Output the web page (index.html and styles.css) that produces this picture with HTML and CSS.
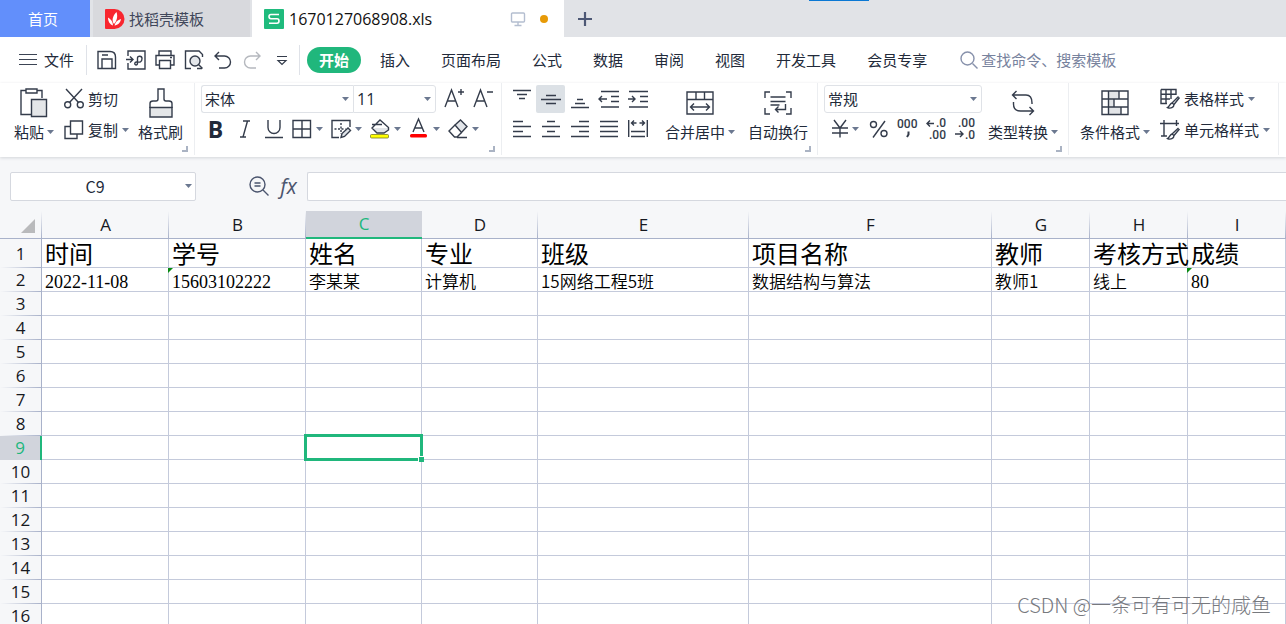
FILE: index.html
```html
<!DOCTYPE html>
<html lang="zh-CN">
<head>
<meta charset="utf-8">
<title>1670127068908.xls</title>
<link rel="stylesheet" href="styles.css">
</head>
<body>
<svg class="defs" aria-hidden="true">
  <symbol id="caret" viewBox="0 0 7 4"><path d="M0 0h7L3.5 4z" fill="#6b7890"/></symbol>
</svg>

<nav class="tabs">
  <button class="tab tab-home">首页</button>
  <button class="tab tab-docer">
    <svg width="20" height="20" viewBox="0 0 20 20"><path d="M1 0h8.500a10 10 0 0 1 0 20H1a1 1 0 0 1-1-1V1a1 1 0 0 1 1-1z" fill="#f8262f"/><path d="M9 15C6.500 11.500 7.500 7 11.500 3c1.500 4.500.5 9-2.500 12zM8 16.500C5 15.500 3 12.500 3 8.500c3 1.500 5 4.500 5 8zM9.500 16.500c.8-3.500 3-5.500 6.500-6.500-.5 3.500-3 6-6.500 6.500z" fill="#fff"/></svg>
    <span>找稻壳模板</span>
  </button>
  <button class="tab tab-file">
    <svg width="20" height="20" viewBox="0 0 20 20"><rect width="20" height="20" rx="1" fill="#1fbb7d"/><path d="M15 5.500H7Q5 5.500 5 7.600T7 9.800h6q2 0 2 2.200t-2 2.200H5" fill="none" stroke="#fff" stroke-width="1.600"/></svg>
    <span class="file-name">1670127068908.xls</span>
    <svg width="16" height="16" viewBox="0 0 16 16" fill="none" stroke="#b4bed0" stroke-width="1.400"><rect x="1.500" y="2" width="13" height="9" rx="1"/><path d="M8 11v3.500M4.500 14.500h7"/></svg>
    <i class="dot"></i>
  </button>
  <button class="tab tab-add" aria-label="新建"><svg width="16" height="16" viewBox="0 0 16 16"><path d="M8 1v14M1 8h14" stroke="#4d5875" stroke-width="2.200"/></svg></button>
  <i class="accent"></i>
</nav>

<header class="menu">
  <button class="file-menu"><svg width="18" height="14" viewBox="0 0 18 14"><path d="M0 1.500h18M0 6.500h18M0 11.500h18" stroke="#3c4454" stroke-width="1.200"/></svg>文件</button>
  <div class="quick">
    <button aria-label="保存"><svg class="ic" viewBox="0 0 20 20"><path d="M1 1.500h12q5.500 0 5.500 5.500v11.500H1zM5 18.500V9h10v9.500M5 5h6"/></svg></button>
    <button aria-label="输出为PDF"><svg class="ic" viewBox="0 0 20 20"><path d="M2 6V1h17v18H2v-6M0 9.500h6.500M4 6.500l3 3-3 3M10 15c-2-.5-1.500-3 .5-3 2 0 5.500 1 5.500-3.500 0-3-4.500-3-4.500-.5v5c0 1.500-.5 2-1.500 2z"/></svg></button>
    <button aria-label="打印"><svg class="ic" viewBox="0 0 20 20"><path d="M4 5V1h12v4M4.500 15H1V5.500h18V15h-3.500"/><path d="M4.500 10.500h11v8h-11zM15 7.500h2"/></svg></button>
    <button aria-label="打印预览"><svg class="ic" viewBox="0 0 20 20"><path d="M7 18.500H1.500V1H15l3.500 3.500V7M13 18.500h5"/><circle cx="11" cy="11" r="5" fill="#e3e6ea"/><path d="M14.500 14.500l4 4"/></svg></button>
    <button aria-label="撤销"><svg class="ic" viewBox="0 0 20 20"><path d="M6 2L2 6l4 4M2 6h9.500a5.700 5.700 0 0 1 0 12H6"/></svg></button>
    <button aria-label="恢复"><svg class="ic pale" viewBox="0 0 20 20"><path d="M14 2l4 4-4 4M18 6H8.500a5.700 5.700 0 0 0 0 12H14"/></svg></button>
    <button aria-label="自定义"><svg class="ic" viewBox="0 0 20 20"><path d="M6 6.500h10M7 10.500l4 4 4-4z" stroke-width="1.200"/></svg></button>
  </div>
  <button class="start">开始</button>
  <nav class="ribbon-tabs">
    <button>插入</button><button>页面布局</button><button>公式</button><button>数据</button><button>审阅</button><button>视图</button><button>开发工具</button><button>会员专享</button>
  </nav>
  <label class="search">
    <svg width="18" height="18" viewBox="0 0 18 18" fill="none" stroke="#8791ab" stroke-width="1.400"><circle cx="7.500" cy="7.500" r="6.500"/><path d="M12.500 12.500l5 5"/></svg>
    <input type="text" placeholder="查找命令、搜索模板" aria-label="查找命令">
  </label>
</header>

<section class="ribbon">
  <div class="group g-clip">
    <button class="big">
      <svg width="28" height="30" viewBox="0 0 28 30" class="line"><path d="M6 2.500H1v24h10M17 2.500h5V10"/><path d="M6 1h11v4H6z"/><path d="M11.500 11.500h15v17h-15z" fill="#e4e6e8"/></svg>
      <span class="cap">粘贴<svg class="caret"><use href="#caret"/></svg></span>
    </button>
    <div class="stack">
      <button class="small"><svg class="ic" viewBox="0 0 20 20"><path d="M2 0l12.500 13.500M18 0L5.500 13.500"/><circle cx="3.700" cy="15.800" r="3"/><circle cx="16.300" cy="15.800" r="3"/></svg><span>剪切</span></button>
      <button class="small"><svg class="ic" viewBox="0 0 20 20"><path d="M6 6.500H1v12h12v-4.500"/><path d="M6.500 1h12v13h-12z"/></svg><span>复制</span><svg class="caret"><use href="#caret"/></svg></button>
    </div>
    <button class="big">
      <svg width="24" height="30" viewBox="0 0 24 30" class="line"><path d="M1 19.500h22v9.500H1z" fill="#e4e6e8"/><path d="M1 20v-4.500c0-1.500 1-2.500 3-2.500h3c1.500 0 2-1 2-2V1h6v10c0 1 .5 2 2 2h3c2 0 3 1 3 2.500V20"/></svg>
      <span class="cap">格式刷</span>
    </button>
    <i class="corner"></i>
  </div>

  <div class="group g-font">
    <div class="stack">
      <div class="row">
        <span class="field f-name"><select aria-label="字体"><option>宋体</option></select><svg class="caret"><use href="#caret"/></svg></span><span class="field f-size"><select aria-label="字号"><option>11</option></select><svg class="caret"><use href="#caret"/></svg></span>
        <button class="tool" aria-label="增大字号"><svg class="ic" viewBox="0 0 20 20"><path d="M0 18L6.500 1 13 18M2.500 12h8M13 3h6M16 0v6"/></svg></button>
        <button class="tool" aria-label="减小字号"><svg class="ic" viewBox="0 0 20 20"><path d="M0 18L6.500 1 13 18M2.500 12h8M13 3h6"/></svg></button>
      </div>
      <div class="row">
        <button class="tool bold">B</button>
        <button class="tool" aria-label="倾斜"><svg class="ic" viewBox="0 0 20 20"><path d="M8 2h7M5 18h6M12.500 2L8 18"/></svg></button>
        <button class="tool" aria-label="下划线"><svg class="ic" viewBox="0 0 20 20"><path d="M4 1v7.500a6 6 0 0 0 12 0V1M1 18.500h18"/></svg></button>
        <button class="split" aria-label="边框"><svg class="ic" viewBox="0 0 20 20"><path d="M1 1.500h17.500v17H1zM10 1.500v17M1 10h17.500"/></svg><svg class="caret"><use href="#caret"/></svg></button>
        <button class="split" aria-label="绘制边框"><svg class="ic" viewBox="0 0 20 20"><path d="M8 18.500H1V1.500h18V8"/><path d="M10 4v11M3.500 10h11" stroke-dasharray="2 1.500"/><path d="M10 18.500l1-4 6-5.500 2.500 2.500-6 6z" fill="#dfe3e8"/></svg><svg class="caret"><use href="#caret"/></svg></button>
        <button class="split" aria-label="填充颜色"><svg class="ic" viewBox="0 0 20 20"><path d="M4 9h14v2l-4 3H7z" fill="#e2e5e9" stroke="none"/><path d="M2 5.500h10M5.500 5.500L10 1l8.500 7.500v2.500L14 14H7L2 9z"/><rect x=".5" y="15.500" width="18" height="3.500" rx="1" fill="#ff0" stroke="#777a22" stroke-width=".8"/></svg><svg class="caret"><use href="#caret"/></svg></button>
        <button class="split" aria-label="字体颜色"><svg class="ic" viewBox="0 0 20 20"><path d="M4 13L9.500 0 15 13M6 9h7"/><rect x="1" y="15" width="17" height="3.500" rx="1.500" fill="#f00" stroke="none"/></svg><svg class="caret"><use href="#caret"/></svg></button>
        <button class="split" aria-label="清除"><svg class="ic" viewBox="0 0 20 20"><path d="M7 6l5.500-5 6.500 6.500-5.500 6z" fill="#e2e5e9"/><path d="M7 6l-6 6 5.500 6H9l4.500-4.500M9 18.500h10"/></svg><svg class="caret"><use href="#caret"/></svg></button>
      </div>
    </div>
    <i class="corner"></i>
  </div>

  <div class="group g-align">
    <div class="stack">
      <div class="row">
        <button class="tool" aria-label="顶端对齐"><svg class="ic" viewBox="0 0 20 20"><path d="M1 1.500h18M5 5.500h10M7 9.500h6"/></svg></button>
        <button class="tool on" aria-label="垂直居中"><svg class="ic" viewBox="0 0 20 20"><path d="M5 6.500h10M0 10.500h20M5 14.500h10"/></svg></button>
        <button class="tool" aria-label="底端对齐"><svg class="ic" viewBox="0 0 20 20"><path d="M7 10.500h6M5 14.500h10M1 18.500h18"/></svg></button>
        <button class="tool" aria-label="减少缩进"><svg class="ic" viewBox="0 0 20 20"><path d="M2 2.500h18M12 7.500h8M12 12.500h8M2 18h18M0 10h8M3 7l-3 3 3 3"/></svg></button>
        <button class="tool" aria-label="增加缩进"><svg class="ic" viewBox="0 0 20 20"><path d="M1 2.500h19M12 7.500h8M12 12.500h8M1 18h19M0 10h7M4 7l3 3-3 3"/></svg></button>
      </div>
      <div class="row">
        <button class="tool" aria-label="左对齐"><svg class="ic" viewBox="0 0 20 20"><path d="M1 2.500h10M1 7.500h18M1 12.500h10M1 17.500h18"/></svg></button>
        <button class="tool" aria-label="水平居中"><svg class="ic" viewBox="0 0 20 20"><path d="M6 2.500h8M1 7.500h18M6 12.500h8M1 17.500h18"/></svg></button>
        <button class="tool" aria-label="右对齐"><svg class="ic" viewBox="0 0 20 20"><path d="M9 2.500h10M1 7.500h18M9 12.500h10M1 17.500h18"/></svg></button>
        <button class="tool" aria-label="两端对齐"><svg class="ic" viewBox="0 0 20 20"><path d="M1 2.500h18M1 7.500h18M1 12.500h18M1 17.500h18"/></svg></button>
        <button class="tool" aria-label="分散对齐"><svg class="ic" viewBox="0 0 20 20"><path d="M.7 1v17M19.300 1v17M3 12.500h14M3 17.500h14M3.500 4h5M11.500 4h5M6 1.500L3.500 4 6 6.500M14 1.500L16.500 4 14 6.500"/></svg></button>
      </div>
    </div>
    <button class="big">
      <svg width="28" height="24" viewBox="0 0 28 24" class="line"><path d="M1 1h26v22H1zM1 8.500h26M10 1v7.500M18.500 1v7.500M4.500 16h19M8 12.500L4.500 16 8 19.500M20 12.500l3.500 3.500-3.500 3.500"/></svg>
      <span class="cap">合并居中<svg class="caret"><use href="#caret"/></svg></span>
    </button>
    <button class="big">
      <svg width="28" height="24" viewBox="0 0 28 24" class="line"><path d="M1 7V1h5M22 1h5v6M1 17v6h5M22 23h5v-6M6.500 6h15M6.500 10.500h15M6.500 14h9M21.500 13v5.500H11.500M14.500 15.500l-3 3 3 3"/></svg>
      <span class="cap">自动换行</span>
    </button>
    <i class="corner"></i>
  </div>

  <div class="group g-num">
    <div class="stack">
      <div class="row"><span class="field f-fmt"><select aria-label="数字格式"><option>常规</option></select><svg class="caret"><use href="#caret"/></svg></span></div>
      <div class="row">
        <button class="split" aria-label="货币"><svg class="ic" viewBox="0 0 20 20"><path d="M6 1l6 8 6-8M4 9h16M4 14h16M12 9v9.500"/></svg><svg class="caret"><use href="#caret"/></svg></button>
        <button class="tool" aria-label="百分比"><svg class="ic" viewBox="0 0 20 20"><circle cx="5.500" cy="5.500" r="3"/><circle cx="16" cy="14.500" r="3"/><path d="M17 2L5 18.500"/></svg></button>
        <button class="tool" aria-label="千位分隔"><svg class="ic digits" viewBox="0 0 20 20"><text x="0" y="9">000</text><path d="M11.500 12.500v3l-1.500 2.500" stroke-width="2"/></svg></button>
        <button class="tool" aria-label="增加小数位"><svg class="ic digits" viewBox="0 0 20 20"><path d="M1 4.500h7M4 1.500l-3 3 3 3"/><text x="10" y="8">.0</text><text x="3" y="20">.00</text></svg></button>
        <button class="tool" aria-label="减少小数位"><svg class="ic digits" viewBox="0 0 20 20"><text x="3" y="8">.00</text><path d="M0 15h8M5 12l3 3-3 3"/><text x="10" y="20">.0</text></svg></button>
      </div>
    </div>
    <button class="big">
      <svg width="24" height="26" viewBox="0 0 24 26" class="line"><path d="M5.500 1L1.500 5l4 4M1.500 5H15q6 0 6 8v1M2.500 12v2q0 7 7 7h13M18.500 17l4 4-4 4"/></svg>
      <span class="cap">类型转换<svg class="caret"><use href="#caret"/></svg></span>
    </button>
    <i class="corner"></i>
  </div>

  <div class="group g-style">
    <button class="big">
      <svg width="28" height="26" viewBox="0 0 28 26" class="line"><path d="M7.500 1H18v8H7.500zM7.500 9H13v8H7.500zM7.500 17H20v7.500H7.500z" fill="#e2e4e7" stroke="none"/><path d="M1 1h26v23.500H1zM1 9h26M1 17h26M7.500 1v23.500M18 1v8M13 9v8M20 17v7.500"/></svg>
      <span class="cap">条件格式<svg class="caret"><use href="#caret"/></svg></span>
    </button>
    <div class="stack">
      <button class="small"><svg class="ic" viewBox="0 0 20 20"><path d="M1 .5h15V6M1 .5v14h6M1 5.300h15M1 10h9M6 .5v14M11 .5V10"/><path d="M18.500 7.500L12 14M19.500 8.500L14 15.500M12 14c-2 .5-2 3-4.500 4.500 3 1.500 6.500 0 6.500-3z" fill="#fff"/></svg><span>表格样式</span><svg class="caret"><use href="#caret"/></svg></button>
      <button class="small"><svg class="ic" viewBox="0 0 20 20"><path d="M0 3.500h19M4 0v16M16.500 0v6M1 16h6"/><path d="M18.500 8L12 14M19.500 9L14 15.500M12 14c-2 .5-2 3-4.500 4.500 3 1.500 6.500 0 6.500-3z" fill="#fff"/></svg><span>单元格样式</span><svg class="caret"><use href="#caret"/></svg></button>
    </div>
  </div>
</section>

<section class="formula">
  <label class="namebox"><input type="text" value="C9" aria-label="名称框"><svg class="caret"><use href="#caret"/></svg></label>
  <button class="fx-find" aria-label="查找"><svg class="slate" width="20" height="20" viewBox="0 0 20 20"><circle cx="8.500" cy="8.500" r="7.500"/><path d="M14 14l5.500 5.500M5.500 7h6M5.500 10h6"/></svg></button>
  <button class="fx">fx</button>
  <input class="formula-input" type="text" aria-label="编辑栏">
</section>

<table class="sheet">
  <colgroup><col class="c-head"><col class="c-a"><col class="c-b"><col class="c-c"><col class="c-c"><col class="c-e"><col class="c-f"><col class="c-g"><col class="c-g"><col class="c-g"></colgroup>
  <thead><tr><th class="all"><svg width="14" height="14" viewBox="0 0 14 14"><path d="M14 0v14H0z" fill="#b9babc"/></svg></th><th>A</th><th>B</th><th class="active">C</th><th>D</th><th>E</th><th>F</th><th>G</th><th>H</th><th>I</th></tr></thead>
  <tbody>
    <tr class="titles"><th>1</th><td>时间</td><td>学号</td><td>姓名</td><td>专业</td><td>班级</td><td>项目名称</td><td>教师</td><td>考核方式</td><td>成绩</td></tr>
    <tr class="record"><th>2</th><td class="num">2022-11-08</td><td class="num flag">15603102222</td><td>李某某</td><td>计算机</td><td>15网络工程5班</td><td>数据结构与算法</td><td>教师1</td><td>线上</td><td class="num flag">80</td></tr>
    <tr><th>3</th><td></td><td></td><td></td><td></td><td></td><td></td><td></td><td></td><td></td></tr>
    <tr><th>4</th><td></td><td></td><td></td><td></td><td></td><td></td><td></td><td></td><td></td></tr>
    <tr><th>5</th><td></td><td></td><td></td><td></td><td></td><td></td><td></td><td></td><td></td></tr>
    <tr><th>6</th><td></td><td></td><td></td><td></td><td></td><td></td><td></td><td></td><td></td></tr>
    <tr><th>7</th><td></td><td></td><td></td><td></td><td></td><td></td><td></td><td></td><td></td></tr>
    <tr><th>8</th><td></td><td></td><td></td><td></td><td></td><td></td><td></td><td></td><td></td></tr>
    <tr><th class="active">9</th><td></td><td></td><td class="selected"><i class="handle"></i></td><td></td><td></td><td></td><td></td><td></td><td></td></tr>
    <tr><th>10</th><td></td><td></td><td></td><td></td><td></td><td></td><td></td><td></td><td></td></tr>
    <tr><th>11</th><td></td><td></td><td></td><td></td><td></td><td></td><td></td><td></td><td></td></tr>
    <tr><th>12</th><td></td><td></td><td></td><td></td><td></td><td></td><td></td><td></td><td></td></tr>
    <tr><th>13</th><td></td><td></td><td></td><td></td><td></td><td></td><td></td><td></td><td></td></tr>
    <tr><th>14</th><td></td><td></td><td></td><td></td><td></td><td></td><td></td><td></td><td></td></tr>
    <tr><th>15</th><td></td><td></td><td></td><td></td><td></td><td></td><td></td><td></td><td></td></tr>
    <tr><th>16</th><td></td><td></td><td></td><td></td><td></td><td></td><td></td><td></td><td></td></tr>
  </tbody>
</table>
<p class="watermark">CSDN @一条可有可无的咸鱼</p>
</body>
</html>
```

FILE: styles.css
```css
* { box-sizing: border-box; }

body {
  margin: 0;
  height: 100vh;
  overflow: hidden;
  position: relative;
  background: #f6f7f9;
  color: #222a3a;
  font: 15px/20px "Noto Sans CJK SC", sans-serif;
}

button, input, select {
  font: inherit;
  color: inherit;
  border: 0;
  padding: 0;
  margin: 0;
  background: none;
  outline: 0;
}

button { white-space: nowrap; }
svg { display: block; flex: none; overflow: visible; }
.defs { position: absolute; width: 0; height: 0; }

.ic, .line, .slate { fill: none; stroke: #343c4b; stroke-width: 1.4; }
.ic { width: 20px; height: 20px; }
.slate { stroke: #4b556e; }
.pale { stroke: #b5b8be; }
.caret { width: 7px; height: 4px; }

/* Document tabs */
.tabs { display: flex; height: 37px; background: #e1e3e7; position: relative; }
.tab { display: flex; align-items: center; }
.tab-home { width: 90px; justify-content: center; padding-right: 4px; background: #628ffb; color: #fff; }
.tab-docer { width: 157px; margin-left: 3px; padding-left: 12px; gap: 4px; background: #d8d9dd; color: #40475a; }
.tab-file { width: 312px; margin-left: 2px; padding: 0 16px 0 12px; gap: 5px; background: #fff; color: #111; }
.file-name { flex: 1; text-align: left; font-family: "Open Sans", sans-serif; font-size: 16px; }
.dot { width: 8px; height: 8px; margin-left: 9px; border-radius: 50%; background: #e79a07; }
.tab-add { padding: 0 13px; }
.accent { position: absolute; top: 0; left: 809px; width: 60px; height: 1px; background: #0a78d4; }

/* Menu row */
.menu { display: flex; align-items: center; height: 46px; background: #fff; }
.file-menu { display: flex; align-items: center; gap: 7px; padding: 0 12px 0 19px; }
.quick { display: flex; height: 30px; padding: 0 4px 0 5px; border: solid #dfe2e8; border-width: 0 1px; }
.quick button { width: 29px; display: grid; place-items: center; }
.start { width: 54px; height: 26px; margin-left: 7px; border-radius: 13px; background: #20b77c; color: #fff; font-weight: 700; }
.ribbon-tabs { display: flex; gap: 31px; padding-left: 19px; }
.search { display: flex; flex: 1; align-items: center; gap: 3px; padding-left: 33px; }
.search input { flex: 1; min-width: 0; }
.search input::placeholder { color: #77829d; opacity: 1; }

/* Ribbon */
.ribbon { display: flex; height: 74px; background: #fff; box-shadow: 0 1px 3px #d3d5d9; position: relative; }
.group { display: flex; flex: none; height: 72px; border-right: 1px solid #eceef1; position: relative; }
.corner { position: absolute; right: 6px; bottom: 3px; width: 6px; height: 6px; border: solid #aab3c3; border-width: 0 2px 2px 0; }
.g-clip { padding: 0 11px 0 14px; gap: 9px; }
.g-clip .stack { padding-left: 1px; }
.g-font { padding: 0 3px 0 6px; }
.g-align { padding: 0 9px 0 5px; gap: 13px; }
.g-num { padding: 0 10px 0 6px; gap: 6px; }
.g-style { padding: 0 8px 0 11px; gap: 10px; }

.big { display: flex; flex-direction: column; align-items: center; height: 61px; padding-top: 3px; }
.big > svg { margin: auto; }
.cap { display: flex; align-items: center; gap: 3px; line-height: 24px; }
.stack { display: grid; grid-template-rows: 32px 30px; align-content: start; }
.row { display: flex; align-items: center; }
.row + .row { height: 28px; }
.small { display: flex; align-items: center; gap: 4px; }
.tool { width: 29px; height: 28px; display: grid; place-items: center; }
.split { display: flex; align-items: center; gap: 4px; width: 39px; height: 28px; padding-left: 4px; }
.on { background: #dce1e6; border-radius: 2px; }
.bold { font: 700 23px/28px "Open Sans", sans-serif; }
.digits { font: 500 12px "Roboto", sans-serif; }
.digits text { fill: #343c4b; stroke: none; }

.field { display: flex; align-items: center; height: 28px; padding: 0 4px 0 3px; border: 1px solid #dfe2e7; border-radius: 3px; }
.field select { flex: 1; min-width: 0; appearance: none; }
.f-name { width: 152px; border-radius: 3px 0 0 3px; border-right: 0; }
.f-size { width: 83px; margin-right: 4px; border-radius: 0 3px 3px 0; }
.f-size select { font-family: "Open Sans", sans-serif; font-size: 16px; }
.f-fmt { width: 158px; }

/* Formula bar */
.formula { display: flex; align-items: center; height: 54px; padding: 4px 0 0 10px; }
.namebox { display: flex; align-items: center; width: 186px; height: 29px; padding-right: 3px; border: 1px solid #d5d8df; border-radius: 2px; background: #fff; }
.namebox input { flex: 1; min-width: 0; padding-right: 6px; text-align: center; font-size: 16px; }
.fx-find { margin-left: 53px; }
.fx { margin: 0 9px 0 10px; width: 19px; color: #4b556e; font: italic 21px/24px "Open Sans", sans-serif; }
.formula-input { flex: 1; min-width: 0; height: 29px; border: 1px solid #d5d8df; border-right: 0; border-radius: 2px 0 0 2px; background: #fff; }

/* Sheet */
.sheet { width: 100%; table-layout: fixed; border-collapse: separate; border-spacing: 0; background: #fff; }
.c-head { width: 42px; }
.c-a { width: 127px; }
.c-b { width: 137px; }
.c-c { width: 116px; }
.c-e { width: 211px; }
.c-f { width: 243px; }
.c-g { width: 98px; }
.sheet th {
  height: 24px;
  padding: 0 0 1px;
  color: #16191f;
  font: 17px/22px "Open Sans", "Noto Sans", sans-serif;
  border-right: 1px solid #a9b2ca;
  background: linear-gradient(90deg, #f6f7f9, #a9b2ca) bottom / 100% 1px no-repeat #f6f7f9;
}
.sheet thead th {
  height: 28px;
  padding: 0;
  line-height: 27px;
  border-right: 0;
  border-bottom: 1px solid #a9b2ca;
  background: linear-gradient(#f6f7f9, #a9b2ca) right / 1px 100% no-repeat #f6f7f9;
}
.all svg { margin: 3px 0 0 21px; }
.sheet thead .active { color: #20b77c; background: #d1d4dc; border-bottom: 2px solid #20b77c; line-height: 26px; }
.sheet tbody .active { color: #20b77c; background: #d1d4dc; border-right: 2px solid #20b77c; }
.sheet td {
  height: 24px;
  padding: 0 0 0 3px;
  color: #000;
  border: solid #c4cadb;
  border-width: 0 1px 1px 0;
  white-space: nowrap;
}
.sheet .titles th { height: 29px; line-height: 27px; }
.titles td { height: 29px; font-size: 24px; line-height: 28px; }
.sheet .record td { padding-top: 2px; font-size: 17px; font-weight: 350; line-height: 21px; }
.sheet .record .num { padding-top: 5px; font-family: "Liberation Serif", serif; font-size: 18px; line-height: 18px; }
.flag, .selected { position: relative; }
.flag::before { content: ""; position: absolute; top: 0; left: -1px; border-top: 5px solid #078a12; border-right: 5px solid transparent; }
.selected::after { content: ""; position: absolute; inset: -2px; border: 3px solid #20b77c; z-index: 1; }
.handle { position: absolute; z-index: 2; right: -3px; bottom: -3px; width: 6px; height: 6px; background: #20b77c; border: solid #fff; border-width: 1px 0 0 1px; }

.watermark { position: absolute; right: 15px; bottom: 4px; margin: 0; font-size: 20px; line-height: 30px; font-weight: 300; color: #77797e; z-index: 3; }
```
